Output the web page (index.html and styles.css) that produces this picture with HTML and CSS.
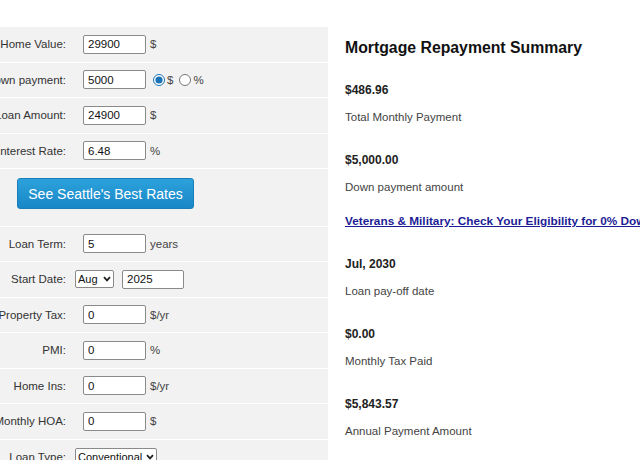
FILE: index.html
```html
<!DOCTYPE html>
<html lang="en">
<head>
<meta charset="utf-8">
<title>Mortgage Repayment Calculator</title>
<link rel="stylesheet" href="styles.css">
</head>
<body>
<div class="page">
  <form class="calc">
    <div class="row">
      <span class="lbl">Home Value:</span>
      <div class="ctl"><input class="num" type="text" value="29900"><span class="unit">$</span></div>
    </div>
    <div class="row">
      <span class="lbl">Down payment:</span>
      <div class="ctl"><input class="num" type="text" value="5000">
        <label class="radio"><input type="radio" name="dp" checked><span>$</span></label>
        <label class="radio"><input type="radio" name="dp"><span>%</span></label>
      </div>
    </div>
    <div class="row">
      <span class="lbl">Loan Amount:</span>
      <div class="ctl"><input class="num" type="text" value="24900"><span class="unit">$</span></div>
    </div>
    <div class="row">
      <span class="lbl">Interest Rate:</span>
      <div class="ctl"><input class="num" type="text" value="6.48"><span class="unit">%</span></div>
    </div>
    <div class="row row-btn">
      <button type="button" class="rates-btn">See Seattle's Best Rates</button>
    </div>
    <div class="row">
      <span class="lbl">Loan Term:</span>
      <div class="ctl"><input class="num" type="text" value="5"><span class="unit">years</span></div>
    </div>
    <div class="row">
      <span class="lbl">Start Date:</span>
      <div class="ctl ctl-sel">
        <span class="sel-wrap"><select class="sel sel-month"><option>Aug</option></select><svg class="chev" viewBox="0 0 8 6" width="8" height="6"><path d="M1 1.2 L4 4.4 L7 1.2" fill="none" stroke="#222" stroke-width="1.8"/></svg></span>
        <input class="num year" type="text" value="2025">
      </div>
    </div>
    <div class="row">
      <span class="lbl">Property Tax:</span>
      <div class="ctl"><input class="num" type="text" value="0"><span class="unit">$/yr</span></div>
    </div>
    <div class="row">
      <span class="lbl">PMI:</span>
      <div class="ctl"><input class="num" type="text" value="0"><span class="unit">%</span></div>
    </div>
    <div class="row">
      <span class="lbl">Home Ins:</span>
      <div class="ctl"><input class="num" type="text" value="0"><span class="unit">$/yr</span></div>
    </div>
    <div class="row">
      <span class="lbl">Monthly HOA:</span>
      <div class="ctl"><input class="num" type="text" value="0"><span class="unit">$</span></div>
    </div>
    <div class="row">
      <span class="lbl">Loan Type:</span>
      <div class="ctl ctl-sel">
        <span class="sel-wrap"><select class="sel sel-type"><option>Conventional</option></select><svg class="chev" viewBox="0 0 8 6" width="8" height="6"><path d="M1 1.2 L4 4.4 L7 1.2" fill="none" stroke="#222" stroke-width="1.8"/></svg></span>
      </div>
    </div>
  </form>

  <section class="summary">
    <h2 class="title">Mortgage Repayment Summary</h2>
    <div class="stat">
      <div class="val">$486.96</div>
      <div class="desc">Total Monthly Payment</div>
    </div>
    <div class="stat">
      <div class="val">$5,000.00</div>
      <div class="desc">Down payment amount</div>
    </div>
    <a class="promo" href="#">Veterans &amp; Military: Check Your Eligibility for 0% Down Payment</a>
    <div class="stat">
      <div class="val">Jul, 2030</div>
      <div class="desc">Loan pay-off date</div>
    </div>
    <div class="stat">
      <div class="val">$0.00</div>
      <div class="desc">Monthly Tax Paid</div>
    </div>
    <div class="stat">
      <div class="val">$5,843.57</div>
      <div class="desc">Annual Payment Amount</div>
    </div>
  </section>
</div>
</body>
</html>
```

FILE: styles.css
```css
html, body {
  margin: 0;
  padding: 0;
  overflow: hidden;
  background: #fff;
}

body {
  font-family: "Liberation Sans", Arial, sans-serif;
  color: #333;
}

.page {
  display: flex;
  align-items: flex-start;
  padding-top: 27px;
  width: 640px;
}

.calc {
  flex: 0 0 auto;
  width: 352px;
  margin-left: -24px;
  background: #f2f2f2;
}

.row {
  display: flex;
  align-items: center;
  height: 34.5px;
  border-bottom: 1px solid #fff;
}

.lbl {
  flex: 0 0 90px;
  text-align: right;
  white-space: nowrap;
  font-size: 11.5px;
  color: #333;
}

.ctl {
  display: flex;
  align-items: center;
  padding-left: 17px;
}

.ctl-sel {
  padding-left: 9px;
}

.num {
  box-sizing: border-box;
  width: 63px;
  height: 19px;
  padding: 0 4px;
  border: 1px solid #8a8a8a;
  border-radius: 2px;
  background: #fff;
  font-family: "Liberation Sans", Arial, sans-serif;
  font-size: 11.5px;
  color: #111;
}

.year {
  margin-left: 8px;
  width: 62px;
}

.unit {
  margin-left: 4px;
  font-size: 11.5px;
  color: #444;
}

.radio {
  display: flex;
  align-items: center;
  font-size: 11.5px;
  color: #444;
}

.radio input {
  width: 12px;
  height: 12px;
  margin: 0 2px 0 7px;
  accent-color: #1a73b8;
}

.radio + .radio input {
  margin-left: 6px;
}

.sel-wrap {
  position: relative;
  display: inline-flex;
}

.sel {
  box-sizing: border-box;
  height: 18px;
  padding: 0 0 0 2px;
  border: 1px solid #8a8a8a;
  border-radius: 2px;
  background: #fff;
  font-family: "Liberation Sans", Arial, sans-serif;
  font-size: 11px;
  color: #111;
  -webkit-appearance: none;
  appearance: none;
}

.chev {
  position: absolute;
  right: 3px;
  top: 6px;
  pointer-events: none;
}

.sel-month {
  width: 39px;
}

.sel-type {
  width: 82px;
}

.row-btn {
  align-items: flex-start;
  box-sizing: border-box;
  height: 57.5px;
  padding: 9px 0 0 41px;
}

.rates-btn {
  box-sizing: border-box;
  width: 177px;
  height: 31px;
  border: 1px solid #1a7fb8;
  border-radius: 3px;
  background: linear-gradient(#2ca2dc, #1987c6);
  color: #fff;
  font-family: "Liberation Sans", Arial, sans-serif;
  font-size: 14px;
  cursor: pointer;
}

.summary {
  flex: 1 1 auto;
  min-width: 0;
  padding-left: 17px;
  white-space: nowrap;
}

.title {
  margin: 11px 0 0;
  font-size: 15.8px;
  line-height: 20px;
  font-weight: bold;
  color: #111;
}

.stat {
  margin-top: 24px;
}

.stat + .stat {
  margin-top: 27px;
}

.val {
  font-size: 12px;
  line-height: 16px;
  font-weight: bold;
  color: #222;
}

.desc {
  margin-top: 11px;
  font-size: 11.5px;
  line-height: 16px;
  color: #444;
}

.promo {
  display: block;
  margin-top: 18px;
  font-size: 11.8px;
  line-height: 16px;
  font-weight: bold;
  color: #1c1c96;
  text-decoration: underline;
}

.promo + .stat {
  margin-top: 27px;
}
```
